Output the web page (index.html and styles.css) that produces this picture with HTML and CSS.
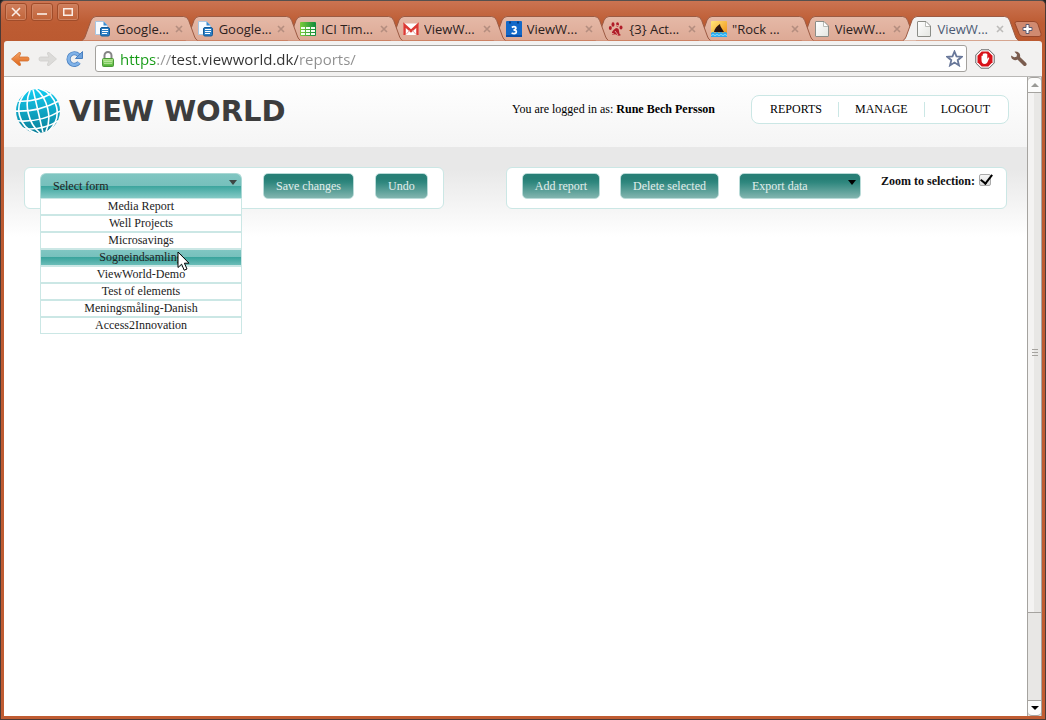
FILE: index.html
```html
<!DOCTYPE html>
<html lang="en">
<head>
<meta charset="utf-8">
<title>ViewWorld - Reports</title>
<link rel="stylesheet" href="styles.css">
</head>
<body>
<svg class="defs" aria-hidden="true">
  <defs>
    <linearGradient id="tabFill" x1="0" y1="0" x2="0" y2="1"><stop offset="0" stop-color="#e5b9a7"/><stop offset="1" stop-color="#dda995"/></linearGradient>
    <linearGradient id="gOrange" x1="0" y1="0" x2="0" y2="1"><stop offset="0" stop-color="#f5a468"/><stop offset="1" stop-color="#dd6417"/></linearGradient>
    <linearGradient id="gGlobe" x1="0" y1="0" x2="0" y2="1"><stop offset="0" stop-color="#12cdf2"/><stop offset="1" stop-color="#0b7f98"/></linearGradient>
    <linearGradient id="gLock" x1="0" y1="0" x2="0" y2="1"><stop offset="0" stop-color="#b5e88f"/><stop offset="1" stop-color="#4cb032"/></linearGradient>
    <linearGradient id="gPage" x1="0" y1="0" x2="1" y2="1"><stop offset="0" stop-color="#fff"/><stop offset="1" stop-color="#e4e6e1"/></linearGradient>
    <linearGradient id="gSheet" x1="0" y1="0" x2="1" y2="0"><stop offset="0" stop-color="#7ccc3c"/><stop offset="1" stop-color="#0e8a3c"/></linearGradient>
    <linearGradient id="gSun" x1="0" y1="0" x2="1" y2="1"><stop offset="0" stop-color="#ffe67a"/><stop offset="1" stop-color="#f08a0c"/></linearGradient>
    <symbol id="tabShape" viewBox="0 0 116 25" preserveAspectRatio="none"><path d="M0 24.500Q2 23.500 3 21L9 4.500Q10.500 .5 14 .5H102Q105.500 .5 107 4.500L113 21Q114 23.500 116 24.500" stroke="#9c5a43"/></symbol>
    <symbol id="close" viewBox="0 0 8 8"><path d="M1 1l6 6M7 1L1 7" stroke-width="1.6" fill="none"/></symbol>
    <symbol id="docs" viewBox="0 0 16 16"><path d="M.5.5h8l4 4v9H.5z" fill="#f7fbff" stroke="#a9c6e2"/><path d="M8.500 .5v4h4z" fill="#3c8cd0"/><rect x="5.500" y="6.500" width="9" height="8.500" rx="1.500" fill="#2d7fc4" stroke="#125a98"/><path d="M7 8.500h6M7 10.500h6M7 12.500h5" stroke="#fff"/></symbol>
    <symbol id="sheet" viewBox="0 0 16 16"><rect y="1" width="16" height="14" rx="1" fill="url(#gSheet)"/><path d="M1 6h4v2H1zM6 6h4v2H6zM11 6h4v2h-4zM1 9h4v2H1zM6 9h4v2H6zM11 9h4v2h-4zM1 12h4v2H1zM6 12h4v2H6zM11 12h4v2h-4z" fill="#f4fff0"/></symbol>
    <symbol id="mail" viewBox="0 0 16 16"><rect y="2.500" width="16" height="11.500" rx="1" fill="#fff"/><path d="M1.500 14V4L8 10l6.500-6v10" fill="none" stroke="#dc3b34" stroke-width="2.500"/><path d="M3 13.500l3.500-4M13 13.500l-3.500-4" stroke="#e9a29c"/></symbol>
    <symbol id="calendar" viewBox="0 0 16 16"><rect width="16" height="16" rx="1" fill="#1268c8"/><path d="M0 14h16v2H0z" fill="#0a4ea8"/><path d="M3 1.500h2M11 1.500h2" stroke="#073a7c" stroke-width="2"/><path d="M5.800 6.500Q8 5 9.700 6.300 10.700 8.500 7.500 9q3.500 0 2.700 2.700Q8.500 13.500 5.600 12" fill="none" stroke="#fff" stroke-width="1.700"/></symbol>
    <symbol id="paw" viewBox="0 0 16 16"><g fill="#b01c28"><path d="M8 7q3 0 3 3t2 4q-2 1.500-4 0T5 14q-2-1-1-3t4-4z"/><ellipse cx="5" cy="3.500" rx="1.500" ry="2.300"/><ellipse cx="9.500" cy="3.500" rx="1.500" ry="2.300"/><ellipse cx="13" cy="6.500" rx="1.500" ry="1.900"/><ellipse cx="2.300" cy="7" rx="1.500" ry="1.900"/></g><path d="M7 10l3 4M3 12l3 1M8 4l3 1" stroke="#ecc0b0" stroke-width=".8"/></symbol>
    <symbol id="shark" viewBox="0 0 16 16"><rect width="16" height="16" rx="1" fill="url(#gSun)"/><path d="M3 11Q4 6 9 3q0 2 1.500 4L13 11z" fill="#2b1410"/><path d="M0 12q2-2 4 0 2-2 4 0 2-2 4 0 2-2 4 0v4H0z" fill="#2aa9ee"/><path d="M0 14.500q2-2 4 0 2-2 4 0 2-2 4 0 2-2 4 0" fill="none" stroke="#8fe0ff"/></symbol>
    <symbol id="page" viewBox="0 0 16 16"><path d="M1.500 1Q1.500.5 2 .5h8L14.500 5v10q0 .5-.5.500H2q-.5 0-.5-.5z" fill="url(#gPage)" stroke="#8b8d87"/><path d="M9.500 1v4.500h4.500" fill="#fff" stroke="#b9bbb6"/></symbol>
  </defs>
</svg>

<div class="window">
  <div class="titlebar">
    <div class="window-buttons">
      <button class="window-button" aria-label="Close window"><svg width="10" height="10" viewBox="0 0 10 10"><path d="M1 1l8 8M9 1L1 9"/></svg></button>
      <button class="window-button" aria-label="Minimize"><svg width="10" height="10" viewBox="0 0 10 10"><path d="M0 7h10"/></svg></button>
      <button class="window-button" aria-label="Maximize"><svg width="10" height="10" viewBox="0 0 10 10"><path d="M.7 1.700h8.600v6.600H.7z"/></svg></button>
    </div>
    <div class="tabs">
      <div class="tab"><svg class="tab-shape"><use href="#tabShape"/></svg><svg class="favicon"><use href="#docs"/></svg><a class="tab-title" href="#">Google...</a><button class="tab-close" aria-label="Close tab"><svg><use href="#close"/></svg></button></div>
      <div class="tab"><svg class="tab-shape"><use href="#tabShape"/></svg><svg class="favicon"><use href="#docs"/></svg><a class="tab-title" href="#">Google...</a><button class="tab-close" aria-label="Close tab"><svg><use href="#close"/></svg></button></div>
      <div class="tab"><svg class="tab-shape"><use href="#tabShape"/></svg><svg class="favicon"><use href="#sheet"/></svg><a class="tab-title" href="#">ICI Tim...</a><button class="tab-close" aria-label="Close tab"><svg><use href="#close"/></svg></button></div>
      <div class="tab"><svg class="tab-shape"><use href="#tabShape"/></svg><svg class="favicon"><use href="#mail"/></svg><a class="tab-title" href="#">ViewW...</a><button class="tab-close" aria-label="Close tab"><svg><use href="#close"/></svg></button></div>
      <div class="tab"><svg class="tab-shape"><use href="#tabShape"/></svg><svg class="favicon"><use href="#calendar"/></svg><a class="tab-title" href="#">ViewW...</a><button class="tab-close" aria-label="Close tab"><svg><use href="#close"/></svg></button></div>
      <div class="tab"><svg class="tab-shape"><use href="#tabShape"/></svg><svg class="favicon"><use href="#paw"/></svg><a class="tab-title" href="#">{3} Act...</a><button class="tab-close" aria-label="Close tab"><svg><use href="#close"/></svg></button></div>
      <div class="tab"><svg class="tab-shape"><use href="#tabShape"/></svg><svg class="favicon"><use href="#shark"/></svg><a class="tab-title" href="#">"Rock ...</a><button class="tab-close" aria-label="Close tab"><svg><use href="#close"/></svg></button></div>
      <div class="tab"><svg class="tab-shape"><use href="#tabShape"/></svg><svg class="favicon"><use href="#page"/></svg><a class="tab-title" href="#">ViewW...</a><button class="tab-close" aria-label="Close tab"><svg><use href="#close"/></svg></button></div>
      <div class="tab tab-active"><svg class="tab-shape"><use href="#tabShape"/></svg><svg class="favicon"><use href="#page"/></svg><a class="tab-title" href="#">ViewW...</a><button class="tab-close" aria-label="Close tab"><svg><use href="#close"/></svg></button></div>
    </div>
    <button class="new-tab" aria-label="New tab"><svg width="28" height="16" viewBox="0 0 28 16"><path d="M3 .5h17q3 0 4 3l3 9q1 3-2 3H9q-3 0-4-3l-4-10Q.5.5 3 .5z" fill="#d08a70" stroke="#98472a"/><path d="M12 3.500h3v3h3v3h-3v3h-3v-3H9v-3h3z" fill="#fff" stroke="#5b5a70"/></svg></button>
  </div>

  <div class="toolbar">
    <button class="icon-button" aria-label="Back"><svg width="20" height="18" viewBox="0 0 20 18"><path d="M1.500 9l7.500-6.500q2-.5 1.500 1.500L9 7h8.500q1.500 0 1.500 2t-1.500 2H9l1.500 3q.5 2-1.500 1.500z" fill="url(#gOrange)" stroke="#d3702f" stroke-width=".8"/></svg></button>
    <button class="icon-button" aria-label="Forward"><svg width="20" height="18" viewBox="0 0 20 18"><path d="M18.500 9L11 2.500q-2-.5-1.500 1.500L11 7H2.500Q1 7 1 9t1.500 2H11l-1.500 3q-.5 2 1.500 1.500z" fill="#dcdbd9" stroke="#cfcecb" stroke-width=".8"/></svg></button>
    <button class="icon-button" aria-label="Reload"><svg width="18" height="18" viewBox="0 0 18 18"><path d="M13 12.500A5.800 5.800 0 1 1 12.500 5" fill="none" stroke="#4a80c0" stroke-width="4.200"/><path d="M16.500 1.500v7h-7z" fill="#6ea2dc" stroke="#4a80c0"/><path d="M13 12.500A5.800 5.800 0 1 1 12.500 5" fill="none" stroke="#80b2e8" stroke-width="2.600"/></svg></button>
    <div class="omnibox">
      <svg width="12" height="16" viewBox="0 0 12 16"><path d="M2.500 8V4.500a3.500 3.500 0 0 1 7 0V8" fill="none" stroke="#858585" stroke-width="2"/><rect x=".5" y="7.500" width="11" height="8" rx="1" fill="url(#gLock)" stroke="#4a9838"/><path d="M2 10.500h8M2 12.500h8" stroke="#d3f2bd" opacity=".6"/></svg>
      <input class="address" type="text" aria-label="Address" value="https://test.viewworld.dk/reports/">
      <button class="icon-button" aria-label="Bookmark"><svg width="17" height="17" viewBox="0 0 17 17"><path d="M8.500 1.500l2 4.900 5.300.4-4.100 3.400 1.300 5.200-4.500-2.800L4 15.400l1.300-5.200-4.100-3.400 5.300-.4z" fill="#fff" stroke="#69789a" stroke-width="1.800"/></svg></button>
    </div>
    <button class="icon-button" aria-label="Ad blocker"><svg width="20" height="20" viewBox="0 0 20 20"><path d="M6 .8h8L19.200 6v8L14 19.200H6L.8 14V6z" fill="#fff" stroke="#666"/><path d="M6.700 2.500h6.600l4.200 4.200v6.600l-4.200 4.200H6.700l-4.200-4.200V6.700z" fill="#d8121a"/><path d="M6.500 11V7q.7-1 1.300 0V5q.8-1 1.500 0V4.500q.8-1 1.500 0V5q.8-.8 1.500 0v5l1-1.500q1.200-.2.900.8l-1.900 4.200q-1 1.500-3.300 1.500-2.500-.5-2.500-4z" fill="#fff"/></svg></button>
    <button class="icon-button wrench" aria-label="Settings"><svg width="18" height="18" viewBox="0 0 18 18"><path d="M1 5.500Q1 9 4 10q2 .5 3.500-.5l6 6q1.300 1 2.500 0t.2-2.600l-6.200-5.800Q10.700 4 8.500 2.500 6.500 1 4.500 1.800L7 4.500 6.500 6.700l-2.300.5z" fill="#7a5c4e"/></svg></button>
  </div>

  <div class="viewport">
    <div class="page">
      <header class="site-header">
        <a class="logo" href="#">
          <svg width="46" height="46" viewBox="0 0 46 46"><circle cx="23" cy="23" r="22" fill="url(#gGlobe)"/><g fill="none" stroke="#fff" stroke-width="1.600" transform="rotate(-13 23 23)"><path d="M23 1v44M17 1Q4 9 4 23t13 22M29 1q13 8 13 22T29 45M20 1Q13 10 13 23T20 45M26 1q7 9 7 22T26 45"/><path d="M6 9q17 5 34 0M1 18q22 6 44 0M1 28q22 7 44 0M5 37q18 6 36 0"/></g></svg>
          <span class="wordmark">VIEW WORLD</span>
        </a>
        <p class="login">You are logged in as: <b>Rune Bech Persson</b></p>
        <nav class="site-nav"><a href="#">REPORTS</a><a href="#">MANAGE</a><a href="#">LOGOUT</a></nav>
      </header>
      <main class="content">
        <section class="panel">
          <div class="dropdown form-dropdown">
            <select class="select form-select" aria-label="Form"><option>Select form</option></select>
            <svg class="arrow" width="8" height="5" viewBox="0 0 8 5"><path d="M0 0h8L4 5z"/></svg>
            <ul class="menu">
              <li>Media Report</li><li>Well Projects</li><li>Microsavings</li><li class="highlighted">Sogneindsamling</li><li>ViewWorld-Demo</li><li>Test of elements</li><li>Meningsmåling-Danish</li><li>Access2Innovation</li>
            </ul>
            <svg class="pointer" width="13" height="21" viewBox="0 0 13 21"><path d="M1 1v15.500l3.600-3.300 2.600 6 2.800-1.200-2.600-5.800h4.600z" fill="#fff" stroke="#000"/></svg>
          </div>
          <button class="action">Save changes</button>
          <button class="action">Undo</button>
        </section>
        <section class="panel report-panel">
          <button class="action">Add report</button>
          <button class="action">Delete selected</button>
          <div class="dropdown export-dropdown">
            <select class="select action" aria-label="Export"><option>Export data</option></select>
            <svg class="arrow" width="8" height="5" viewBox="0 0 8 5"><path d="M0 0h8L4 5z"/></svg>
          </div>
          <label class="zoom-option">Zoom to selection: <input class="check" type="checkbox" checked></label>
        </section>
      </main>
    </div>
    <div class="scrollbar" aria-hidden="true">
      <div class="scroll-end scroll-up"><svg width="8" height="4" viewBox="0 0 8 4"><path d="M0 4h8L4 0z" fill="#9a9a96"/></svg></div>
      <div class="thumb"><i></i><i></i><i></i></div>
      <div class="track"></div>
      <div class="scroll-end scroll-down"><svg width="8" height="4" viewBox="0 0 8 4"><path d="M0 0h8L4 4z"/></svg></div>
    </div>
  </div>
</div>
</body>
</html>
```
FILE: styles.css
```css
* { box-sizing: border-box; }
body {
  margin: 0;
  background: #222;
  font: 12px/15px "Liberation Serif", serif;
  color: #000;
}
button, input, select { font: inherit; color: inherit; margin: 0; }
button { padding: 0; border: 0; background: none; }
a { color: inherit; text-decoration: none; }
svg { display: block; flex: none; }
.defs { position: absolute; width: 0; height: 0; }

.window {
  display: flex;
  flex-direction: column;
  min-height: 100vh;
  padding: 0 3px 3px;
  border: 1px solid #4b3a36;
  border-top-color: #55504e;
  border-radius: 5px 5px 0 0;
  background: linear-gradient(#cb7452, #bd5c33 22px, #bb5a31 40px, #c05c32);
}

/* Title bar */
.titlebar { display: flex; height: 40px; }
.window-buttons { display: flex; gap: 4px; padding: 2px 0 0 1px; }
.window-button {
  display: flex;
  align-items: center;
  justify-content: center;
  width: 22px;
  height: 18px;
  border: 1px solid #a04c2a;
  border-radius: 3px;
  background: linear-gradient(#d07e5c, #c16439);
  box-shadow: inset 0 0 0 1px #cf8361;
}
.window-button path { fill: none; stroke: #fbeee6; stroke-width: 1.6; }
.tabs { display: flex; flex: 1; min-width: 0; margin: 15px -5px 0 3px; isolation: isolate; }
.tab {
  position: relative;
  display: flex;
  align-items: center;
  flex: 1;
  min-width: 0;
  height: 25px;
  padding: 0 15px 0 13px;
}
.tab + .tab { margin-left: -13px; }
/* Each tab overlaps the one on its right */
.tab:nth-child(1) { z-index: 8; }
.tab:nth-child(2) { z-index: 7; }
.tab:nth-child(3) { z-index: 6; }
.tab:nth-child(4) { z-index: 5; }
.tab:nth-child(5) { z-index: 4; }
.tab:nth-child(6) { z-index: 3; }
.tab:nth-child(7) { z-index: 2; }
.tab:nth-child(8) { z-index: 1; }
.tab.tab-active { z-index: 9; }
.tab-shape { position: absolute; inset: 0; width: 100%; height: 100%; fill: url(#tabFill); }
.tab-active .tab-shape { fill: #f2f1f0; }
.favicon { position: relative; width: 16px; height: 16px; margin-right: 5px; }
.tab-title {
  position: relative;
  flex: 1;
  min-width: 0;
  overflow: hidden;
  white-space: nowrap;
  font: 13px/18px "Open Sans", sans-serif;
  color: #2c211d;
}
.tab-active .tab-title { color: #4c5a73; }
.tab-close { position: relative; stroke: #b48d7f; }
.tab-active .tab-close { stroke: #bcbbb9; }
.tab-close svg { width: 8px; height: 8px; }
.new-tab { align-self: flex-end; margin-bottom: 4px; }

/* Toolbar */
.toolbar {
  display: flex;
  align-items: center;
  gap: 8px;
  height: 36px;
  padding: 0 14px 0 6px;
  border-bottom: 1px solid #b9b8b6;
  border-radius: 3px 3px 0 0;
  background: #f2f1f0;
}
.omnibox {
  display: flex;
  align-items: center;
  flex: 1;
  height: 27px;
  margin-left: 3px;
  padding: 0 3px 0 6px;
  border: 1px solid #a3a19d;
  border-radius: 3px;
  background: #fff;
}
.address {
  flex: 1;
  min-width: 0;
  height: 24px;
  padding: 0 0 0 6px;
  border: 0;
  outline: 0;
  font: 15px/24px "Open Sans", sans-serif;
  color: transparent;
  background: linear-gradient(90deg, #149a14 0 43px, #969696 43px 57px, #333 57px 184px, #8f8f8f 184px);
  -webkit-background-clip: text;
  background-clip: text;
}
.wrench { margin-left: 7px; }

/* Page */
.viewport { display: flex; flex: 1; }
.page {
  flex: 1;
  min-width: 0;
  background: #fff;
}
.site-header {
  display: flex;
  align-items: center;
  height: 70px;
  padding: 0 18px 2px 11px;
  background: linear-gradient(#fff, #f5f5f5);
}
.logo { display: flex; align-items: center; gap: 8px; margin-right: auto; }
.wordmark {
  font: bold 29px/36px "DejaVu Sans", sans-serif;
  color: #3d3d3d;
}
.login { margin: 0 36px 3px 0; }
.site-nav {
  display: flex;
  align-items: center;
  height: 29px;
  margin-bottom: 3px;
  padding: 0 2px;
  border: 1px solid #cbe7e5;
  border-radius: 8px;
  background: #fff;
}
.site-nav a { padding: 0 16px; }
.site-nav a + a { border-left: 1px solid #cbe7e5; }

.content {
  display: flex;
  align-items: flex-start;
  justify-content: space-between;
  padding: 20px 20px 28px;
  background: linear-gradient(#e8e8e8, #e8e8e8 22px, #fff 90px);
}
.panel {
  display: flex;
  align-items: flex-start;
  gap: 21px;
  padding: 5px 15px 9px;
  border: 1px solid #cbe7e5;
  border-radius: 6px;
  background: #fff;
}
.report-panel { gap: 20px; }
.action {
  height: 26px;
  padding: 0 12px;
  border: 1px solid #b9dbd8;
  border-radius: 5px;
  background: linear-gradient(#277f76 20%, #2f877e 35%, #82b5af);
  color: #e2efed;
  white-space: nowrap;
}
.dropdown { position: relative; }
.form-dropdown { width: 202px; }
.export-dropdown { width: 122px; }
.select { display: block; width: 100%; appearance: none; outline: 0; }
.form-select {
  height: 25px;
  padding: 0 12px;
  border: 1px solid #a9d8d4;
  border-bottom: 0;
  border-radius: 6px 6px 0 0;
  background: linear-gradient(#80c6c2, #76c0bc 50%, #3ba49d 50%, #84cac6);
  color: #222;
}
.arrow { position: absolute; top: 7px; right: 5px; pointer-events: none; }
.form-dropdown .arrow { fill: #3d4644; }
.menu {
  position: absolute;
  z-index: 2;
  top: 25px;
  left: 0;
  right: 0;
  margin: 0;
  padding: 0;
  list-style: none;
  text-align: center;
  color: #222;
}
.menu li { border: 1px solid #cbe7e5; background: #fff; }
.menu .highlighted { background: linear-gradient(#80c6c2, #76c0bc 50%, #3ba49d 50%, #6cbdb8); }
.pointer { position: absolute; z-index: 3; top: 78px; left: 137px; }
.zoom-option { display: flex; gap: 4px; padding-top: 1px; font-weight: bold; color: #111; }
.check {
  appearance: none;
  width: 12px;
  height: 12px;
  border: 1px solid #aaa;
  border-radius: 2px;
  background: linear-gradient(#f6f6f6, #dcdcdc);
}
.check:checked::before {
  content: "";
  display: block;
  width: 5px;
  height: 10px;
  margin: -3px 0 0 3px;
  border: solid #000;
  border-width: 0 2px 2px 0;
  transform: rotate(38deg);
}

/* Scrollbar */
.scrollbar { display: flex; flex-direction: column; width: 15px; border: solid #a5a39f; border-width: 0 1px; background: #e8e7e5; }
.scroll-end {
  display: flex;
  align-items: center;
  justify-content: center;
  height: 15px;
  background: #fcfcfb;
}
.scroll-up { border-radius: 4px 4px 0 0; border-top: 1px solid #a5a39f; }
.scroll-down { border-radius: 0 0 4px 4px; border-bottom: 1px solid #a5a39f; }
.thumb {
  display: flex;
  flex-direction: column;
  align-items: center;
  justify-content: center;
  gap: 2px;
  flex: 6;
  border: solid #a5a39f;
  border-width: 1px 0;
  background: linear-gradient(90deg, #f4f3f2 50%, #e8e7e5 50%);
}
.thumb i { width: 6px; height: 1px; background: #a5a39f; }
.track { flex: 1; border-bottom: 1px solid #a5a39f; }
```
